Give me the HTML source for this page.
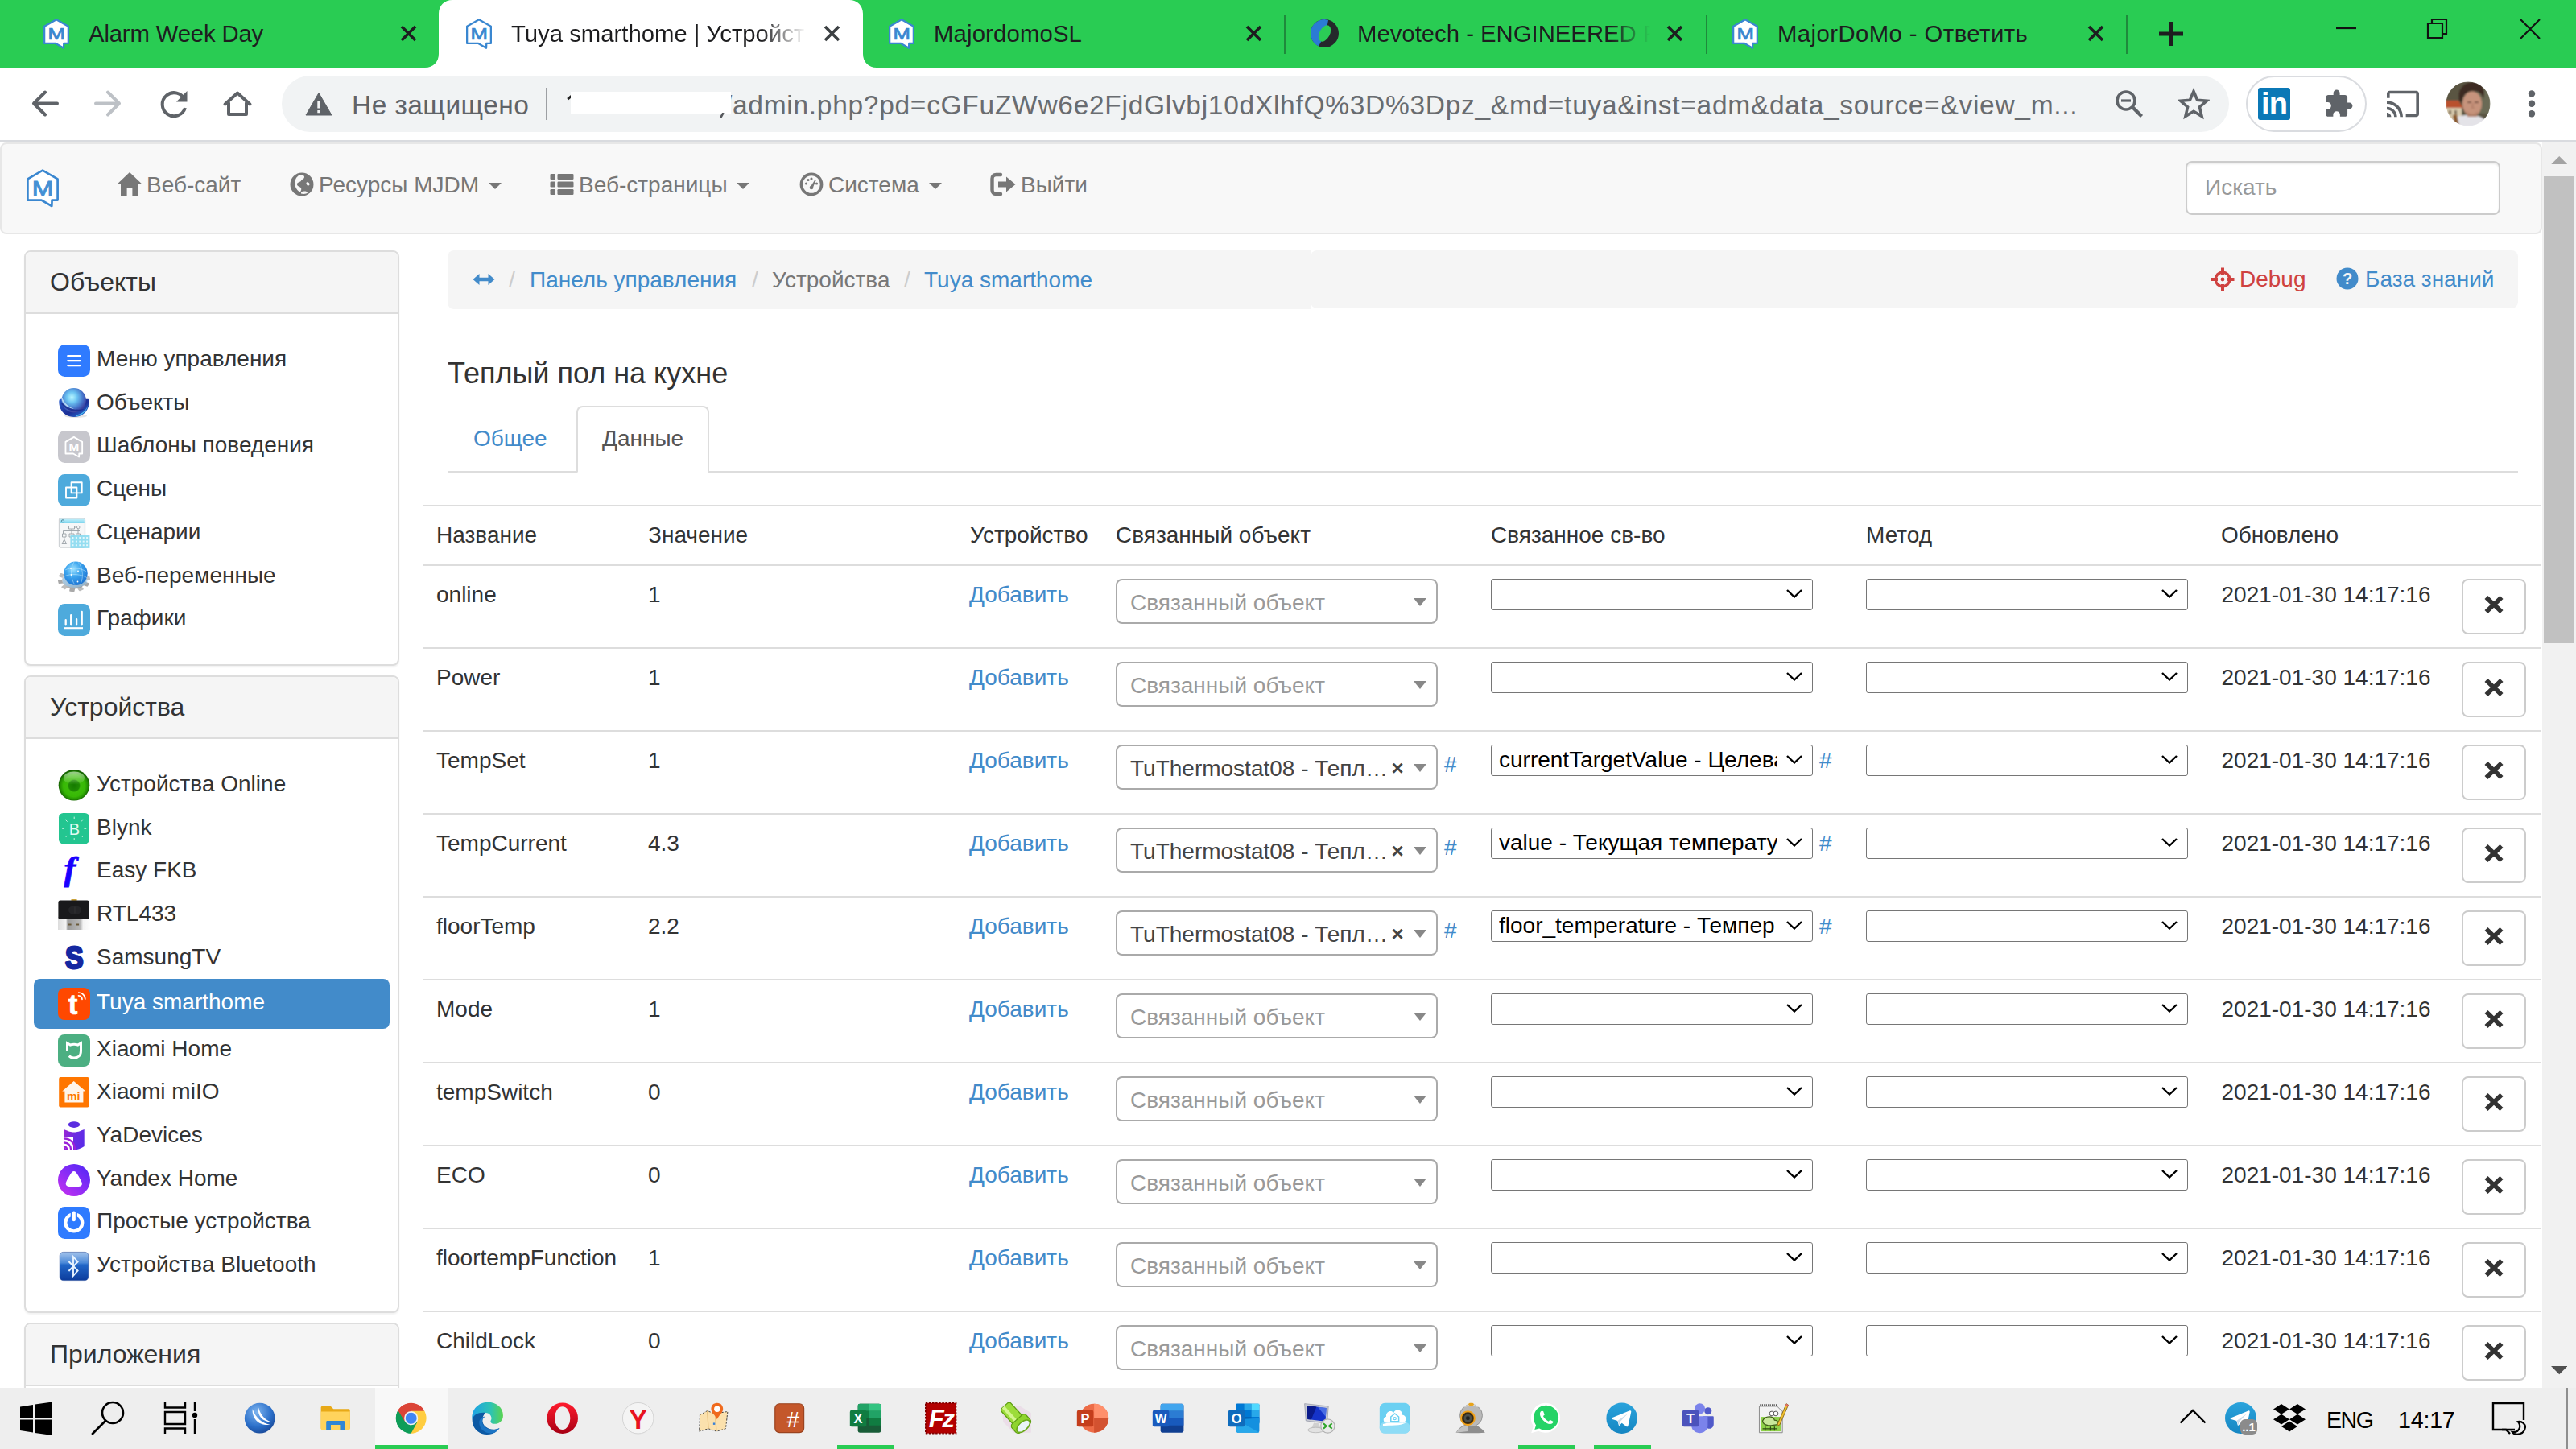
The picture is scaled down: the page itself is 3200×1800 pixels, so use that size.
<!DOCTYPE html><html lang="ru"><head><meta charset="utf-8"><title>Tuya smarthome | Устройства</title><style>
*{box-sizing:border-box}
html,body{margin:0;padding:0}
body{width:3200px;height:1800px;overflow:hidden;position:relative;background:#fff;font-family:"Liberation Sans",sans-serif;font-size:28px;line-height:40px;color:#333}
a{color:#428bca;text-decoration:none}
.abs{position:absolute}
svg{display:block}
/* chrome */
#tabstrip{position:absolute;left:0;top:0;width:3200px;height:84px;background:#29cc53}
.ttl{position:absolute;top:21.5px;height:40px;line-height:40px;font-size:29.3px;color:#1d1d1f;white-space:nowrap;overflow:hidden}
.tx{position:absolute;top:31px;width:21px;height:21px}
.tsep{position:absolute;top:19px;width:2px;height:48px;background:#1f8a3c}
#toolbar{position:absolute;left:0;top:84px;width:3200px;height:93px;background:#fff;border-bottom:3px solid #d9dbdf;z-index:5}
#omni{position:absolute;left:350px;top:10px;width:2419px;height:70px;border-radius:35px;background:#f1f3f4}
/* page */
#page{position:absolute;left:0;top:176px;width:3158px;height:1548px;overflow:hidden;background:#fff}
#navbar{position:absolute;left:0;top:1px;width:3158px;height:114px;background:#f8f8f8;border:2px solid #e7e7e7;border-radius:8px}
.nv{position:absolute;top:31px;height:40px;line-height:40px;color:#777;white-space:nowrap}
.nv svg{position:absolute;top:4px}
.caret{display:inline-block;width:0;height:0;margin-left:4px;vertical-align:middle;border-top:8px solid #777;border-left:8px solid transparent;border-right:8px solid transparent;position:relative;top:-1px}
#search{position:absolute;left:2713px;top:20.5px;width:391px;height:67px;border:2px solid #ccc;border-radius:8px;background:#fff;box-shadow:inset 0 2px 2px rgba(0,0,0,.075);color:#999;padding:11px 22px;line-height:40px}
.panel{position:absolute;left:30px;width:466px;background:#fff;border:2px solid #ddd;border-radius:8px;box-shadow:0 2px 2px rgba(0,0,0,.05)}
.phead{height:77px;background:#f5f5f5;border-bottom:2px solid #ddd;border-radius:6px 6px 0 0;padding:20px 30px;font-size:32px;line-height:35px;color:#333}
.it{position:absolute;left:10px;width:442px;height:54px;white-space:nowrap}
.it .ic{position:absolute;left:30px;top:7px;width:40px;height:40px}
.it .tx2{position:absolute;left:78px;top:5px;line-height:40px;color:#333}
.it.act{background:#428bca;border-radius:8px;height:62px}
.it.act .ic{top:11px}
.it.act .tx2{color:#fff;top:9px}
#bc{position:absolute;left:556px;top:135px;width:2572px;height:73px;line-height:40px;white-space:nowrap}
#bc .b1{position:absolute;left:0;top:0;width:1072px;height:73px;background:#f5f5f5;border-radius:8px 0 0 8px}
#bc .b2{position:absolute;left:1072px;top:0;width:1500px;height:72px;background:#f5f5f5;border-radius:8px}
#bc span,#bc a{position:absolute;top:17px}
.sl{color:#ccc}
#h4{position:absolute;left:556px;top:268px;font-size:36px;line-height:40px;color:#333;white-space:nowrap}
#tabs{position:absolute;left:556px;top:329px;width:2572px;height:82px;border-bottom:2px solid #ddd}
.row{position:absolute;left:526px;width:2631px;height:103px;border-top:2px solid #ddd}
.row>*{position:absolute;top:16px;white-space:nowrap}
.s2{left:860px;width:400px;height:56px;border:2px solid #aaa;border-radius:8px;background:#fff;line-height:56px;padding-left:16px;color:#999;top:16px}
.s2 .arr{position:absolute;left:368px;top:22px;width:0;height:0;border-top:10px solid #888;border-left:8px solid transparent;border-right:8px solid transparent}
.s2.v{color:#444}
.s2 .clr{position:absolute;left:340.5px;top:-1px;font-weight:bold;color:#444;font-size:26px}
.s2 .txt{display:block;width:324px;overflow:hidden;text-overflow:ellipsis;white-space:nowrap}
.ns{width:400px;height:38.5px;border:1.5px solid #767676;border-radius:3px;background:#fff;font-size:28px;line-height:36px;color:#000;padding-left:9px;overflow:hidden}
.ns .chev{position:absolute;right:12px;top:12px}
.ns .t{display:block;width:345px;overflow:hidden;white-space:nowrap}
.xb{left:2532px;width:80px;height:69px;border:2px solid #ccc;border-radius:8px;background:#fff}
/* taskbar */
#taskbar{position:absolute;left:0;top:1724px;width:3200px;height:76px;background:#eeeeee}
.tb{position:absolute;top:14px;width:48px;height:48px}
.ul{position:absolute;top:71px;height:5px;background:#29cc53}
</style></head><body>
<div id="tabstrip">
<svg class="abs" style="left:520px;top:0" width="580" height="84" viewBox="520 0 580 84"><path d="M528 84 C538 84 545 77 545 67 L545 17 C545 7 552 0 562 0 L1055 0 C1065 0 1072 7 1072 17 L1072 67 C1072 77 1079 84 1089 84 Z" fill="#fff"/></svg>
<div class="abs" style="left:54px;top:23px;width:32px;height:38px"><svg width="32" height="38.2" viewBox="0 0 40 47.75" style=""><path d="M20 1.6 L38.6 12.3 L38.6 38.6 L31.6 38.6 L31.3 46 L18.5 38.6 L1.4 38.6 L1.4 12.3 Z" fill="#fff" stroke="#3a87d0" stroke-width="2.9" stroke-linejoin="round"/><text x="0" y="0" text-anchor="middle" transform="translate(20.1 32.9) scale(1.27 1)" font-family="Liberation Sans,sans-serif" font-size="25.3" fill="#3a87d0" stroke="#3a87d0" stroke-width=".9">M</text></svg></div>
<div class="ttl" style="left:110px;width:240px;letter-spacing:-.16px">Alarm Week Day</div>
<svg class="tx" style="left:497px" viewBox="0 0 21 21"><path d="M2 2 L19 19 M19 2 L2 19" stroke="#1d1d1f" stroke-width="3.6" fill="none" stroke-linecap="butt"/></svg>
<div class="abs" style="left:579px;top:23px;width:32px;height:38px"><svg width="32" height="38.2" viewBox="0 0 40 47.75" style=""><path d="M20 1.6 L38.6 12.3 L38.6 38.6 L31.6 38.6 L31.3 46 L18.5 38.6 L1.4 38.6 L1.4 12.3 Z" fill="#fff" stroke="#3a87d0" stroke-width="2.9" stroke-linejoin="round"/><text x="0" y="0" text-anchor="middle" transform="translate(20.1 32.9) scale(1.27 1)" font-family="Liberation Sans,sans-serif" font-size="25.3" fill="#3a87d0" stroke="#3a87d0" stroke-width=".9">M</text></svg></div>
<div class="ttl" style="left:635px;width:366px;-webkit-mask-image:linear-gradient(90deg,#000 310px,transparent 366px)">Tuya smarthome | Устройства</div>
<svg class="tx" style="left:1023px" viewBox="0 0 21 21"><path d="M2 2 L19 19 M19 2 L2 19" stroke="#3c4043" stroke-width="3.6" fill="none" stroke-linecap="butt"/></svg>
<div class="abs" style="left:1104px;top:23px;width:32px;height:38px"><svg width="32" height="38.2" viewBox="0 0 40 47.75" style=""><path d="M20 1.6 L38.6 12.3 L38.6 38.6 L31.6 38.6 L31.3 46 L18.5 38.6 L1.4 38.6 L1.4 12.3 Z" fill="#fff" stroke="#3a87d0" stroke-width="2.9" stroke-linejoin="round"/><text x="0" y="0" text-anchor="middle" transform="translate(20.1 32.9) scale(1.27 1)" font-family="Liberation Sans,sans-serif" font-size="25.3" fill="#3a87d0" stroke="#3a87d0" stroke-width=".9">M</text></svg></div>
<div class="ttl" style="left:1160px;width:300px;letter-spacing:.15px">MajordomoSL</div>
<svg class="tx" style="left:1547px" viewBox="0 0 21 21"><path d="M2 2 L19 19 M19 2 L2 19" stroke="#1d1d1f" stroke-width="3.6" fill="none" stroke-linecap="butt"/></svg>
<div class="tsep" style="left:1595px"></div>
<div class="abs" style="left:1628px;top:24px;width:35px;height:35px"><svg width="35" height="35" viewBox="0 0 35 35" style=""><circle cx="17.5" cy="17.5" r="17.5" fill="#25282b"/><path d="M17.5 0 A17.5 17.5 0 0 0 10 33.3 L19 17.5 L22 1 Z" fill="#2b7bd4"/><path d="M22 6 C13 9 9 17 11 27 C16 29 24 24 25 14 C25 10 24 8 22 6 Z" fill="#fff" opacity=".0"/><ellipse cx="17.5" cy="17.5" rx="6.5" ry="11" transform="rotate(28 17.5 17.5)" fill="#2bcc56"/></svg></div>
<div class="ttl" style="left:1686px;width:364px;-webkit-mask-image:linear-gradient(90deg,#000 315px,transparent 364px)">Mevotech - ENGINEERED FOR</div>
<svg class="tx" style="left:2070px" viewBox="0 0 21 21"><path d="M2 2 L19 19 M19 2 L2 19" stroke="#1d1d1f" stroke-width="3.6" fill="none" stroke-linecap="butt"/></svg>
<div class="tsep" style="left:2119px"></div>
<div class="abs" style="left:2152px;top:23px;width:32px;height:38px"><svg width="32" height="38.2" viewBox="0 0 40 47.75" style=""><path d="M20 1.6 L38.6 12.3 L38.6 38.6 L31.6 38.6 L31.3 46 L18.5 38.6 L1.4 38.6 L1.4 12.3 Z" fill="#fff" stroke="#3a87d0" stroke-width="2.9" stroke-linejoin="round"/><text x="0" y="0" text-anchor="middle" transform="translate(20.1 32.9) scale(1.27 1)" font-family="Liberation Sans,sans-serif" font-size="25.3" fill="#3a87d0" stroke="#3a87d0" stroke-width=".9">M</text></svg></div>
<div class="ttl" style="left:2208px;width:340px;letter-spacing:.43px">MajorDoMo - Ответить</div>
<svg class="tx" style="left:2593px" viewBox="0 0 21 21"><path d="M2 2 L19 19 M19 2 L2 19" stroke="#1d1d1f" stroke-width="3.6" fill="none" stroke-linecap="butt"/></svg>
<div class="tsep" style="left:2641px"></div>
<svg class="abs" style="left:2682px;top:27px" width="30" height="30" viewBox="0 0 30 30"><path d="M15 0 V30 M0 15 H30" stroke="#1d1d1f" stroke-width="5" stroke-linecap="round"/></svg>
<svg class="abs" style="left:2902px;top:20px" width="260" height="32" viewBox="0 0 260 32"><path d="M0 15 H25" stroke="#111" stroke-width="2.2"/><path d="M114 9 H132 V27 H114 Z M119 9 V4 H137 V22 H132" stroke="#111" stroke-width="2.2" fill="none"/><path d="M229 4 L253 28 M253 4 L229 28" stroke="#111" stroke-width="2.2"/></svg>
</div>
<div id="toolbar">
<svg class="abs" style="left:0;top:0" width="340" height="92" viewBox="0 0 340 92"><path d="M71 44.5 H43 M56 30.5 L42 44.5 L56 58.5" stroke="#5f6368" stroke-width="4" fill="none" stroke-linecap="round" stroke-linejoin="round"/><path d="M119 44.5 H147 M134 30.5 L148 44.5 L134 58.5" stroke="#bdc1c6" stroke-width="4" fill="none" stroke-linecap="round" stroke-linejoin="round"/><path d="M229.5 40 A14.5 14.5 0 1 0 230 50" stroke="#5f6368" stroke-width="4" fill="none"/><path d="M232.5 29 V42.5 H219 Z" fill="#5f6368"/><path d="M284 44 V58 H306 V44 M279.5 45.5 L295 31.5 L310.5 45.5" stroke="#5f6368" stroke-width="4" fill="none" stroke-linejoin="round" stroke-linecap="round"/></svg>
<div id="omni">
<svg class="abs" style="left:29px;top:21px" width="34" height="29" viewBox="0 0 34 29"><path d="M17 0.5 L33 28 H1 Z" fill="#5f6368" stroke="#5f6368" stroke-width="1" stroke-linejoin="round"/><path d="M15.3 10 H18.7 V19.5 H15.3 Z M15.3 22 H18.7 V25.3 H15.3 Z" fill="#f1f3f4"/></svg>
<div class="abs" style="left:87px;top:13.5px;font-size:33.5px;line-height:46px;color:#5f6368;letter-spacing:.45px;white-space:nowrap">Не защищено</div>
<div class="abs" style="left:328px;top:15px;width:2px;height:40px;background:#9d9fa3"></div>
<svg class="abs" style="left:352px;top:22px" width="12" height="12" viewBox="0 0 12 12"><path d="M3.2 7.2 L8 3.2" stroke="#222" stroke-width="3"/></svg>
<div class="abs" style="left:359px;top:20px;width:199px;height:28px;background:#fff"></div>
<div class="abs" style="left:550px;top:13.5px;font-size:33.5px;line-height:46px;color:#696c70;letter-spacing:.71px;white-space:nowrap">/admin.php?pd=cGFuZWw6e2FjdGlvbj10dXlhfQ%3D%3Dpz_&amp;md=tuya&amp;inst=adm&amp;data_source=&amp;view_m...</div>
<div class="abs" style="left:359px;top:20px;width:199px;height:28px;background:#fff"></div>
<svg class="abs" style="left:542px;top:46px" width="12" height="8" viewBox="0 0 12 8"><path d="M3.2 6.2 L6.6 0" stroke="#55585c" stroke-width="2.6"/></svg>
<svg class="abs" style="left:2277px;top:17px" width="36" height="36" viewBox="0 0 36 36"><circle cx="14" cy="14" r="11" stroke="#5f6368" stroke-width="3.6" fill="none"/><path d="M8 14 H20" stroke="#5f6368" stroke-width="3.2"/><path d="M22 22 L33.5 33.5" stroke="#5f6368" stroke-width="4.4"/></svg>
<svg class="abs" style="left:2355px;top:15px" width="40" height="40" viewBox="0 0 40 40"><path d="M20 4.5 L24.6 15.3 L36.3 16.3 L27.4 24 L30.1 35.4 L20 29.3 L9.9 35.4 L12.6 24 L3.7 16.3 L15.4 15.3 Z" stroke="#5f6368" stroke-width="3.6" fill="none" stroke-linejoin="miter"/></svg>
</div>
<div class="abs" style="left:2790px;top:10px;width:150px;height:70px;border:2px solid #dadce0;border-radius:35px"></div><div class="abs" style="left:2805px;top:25px;width:40px;height:40px;background:#0b78b6;border-radius:3px;color:#fff;font-weight:bold;font-size:38px;line-height:41px;text-align:center;letter-spacing:-1px;overflow:hidden">in</div><svg class="abs" style="left:2886px;top:26px" width="38" height="38" viewBox="0 0 24 24"><path d="M20.5 11H19V7c0-1.1-.9-2-2-2h-4V3.5C13 2.12 11.88 1 10.5 1S8 2.12 8 3.5V5H4c-1.1 0-1.99.9-1.99 2v3.8H3.5c1.49 0 2.7 1.21 2.7 2.7s-1.21 2.7-2.7 2.7H2V20c0 1.1.9 2 2 2h3.8v-1.5c0-1.49 1.21-2.7 2.7-2.7 1.49 0 2.7 1.21 2.7 2.7V22H17c1.1 0 2-.9 2-2v-4h1.5c1.38 0 2.5-1.12 2.5-2.5S21.880 11 20.500 11z" fill="#5f6368"/></svg><svg class="abs" style="left:2963px;top:25px" width="44" height="40" viewBox="0 0 24 22"><path d="M1 17v3h3c0-1.66-1.34-3-3-3zm0-4v2c2.760 0 5 2.240 5 5h2c0-3.870-3.130-7-7-7zm0-4v2c4.970 0 9 4.030 9 9h2c0-6.080-4.930-11-11-11zm20-7H3c-1.100 0-2 .9-2 2v3h2V4h18v14h-7v2h7c1.100 0 2-.9 2-2V4c0-1.100-.9-2-2-2z" fill="#5f6368"/></svg><svg class="abs" style="left:3038px;top:17px" width="56" height="56" viewBox="0 0 56 56"><defs><clipPath id="avc"><circle cx="28" cy="28" r="27.5"/></clipPath><filter id="avb" x="-10%" y="-10%" width="120%" height="120%"><feGaussianBlur stdDeviation="0.9"/></filter></defs><g clip-path="url(#avc)"><g filter="url(#avb)"><rect width="56" height="56" fill="#5a5443"/><rect x="38" y="0" width="18" height="40" fill="#6b6a55"/><rect x="0" y="30" width="20" height="22" fill="#d6c8ab"/><path d="M0 24 L16 24 L22 33 L0 33 Z" fill="#b9512f"/><rect x="4" y="36" width="3" height="5" fill="#7a6a55"/><rect x="11" y="36" width="3" height="5" fill="#7a6a55"/><path d="M4 56 C7 45 15 42 30 42 C42 42 50 45 53 56 Z" fill="#e4e3e8"/><path d="M9 42 L14 41 L17 56 L11 56 Z" fill="#8a5a2b"/><ellipse cx="33" cy="28" rx="12" ry="15.500" fill="#c6937b"/><path d="M17 24 C14 8 24 1 34 1 C45 1 50 8 47 22 C45 15 41 12 34 12 C27 12 21 16 20 27 Z" fill="#3e2b20"/><path d="M26 37 C29 42 37 42 40 37 L39 44 L27 44Z" fill="#b07f68"/><path d="M27 26 H32 M36 26 H41" stroke="#5b3d30" stroke-width="1.500"/><path d="M34 27 L33 33 H36" stroke="#a87660" stroke-width="1.200" fill="none"/></g></g></svg><svg class="abs" style="left:3139px;top:26px" width="12" height="38" viewBox="0 0 12 38"><circle cx="6" cy="6.4" r="4.2" fill="#5f6368"/><circle cx="6" cy="18.8" r="4.2" fill="#5f6368"/><circle cx="6" cy="31.2" r="4.2" fill="#5f6368"/></svg>
</div>
<div id="page">
<div id="navbar">
<div class="abs" style="left:31px;top:31px;width:40px;height:48px"><svg width="40" height="48" viewBox="0 0 40 48" style=""><path d="M20 1.6 L38.6 12.3 L38.6 38.6 L31.6 38.6 L31.3 46 L18.5 38.6 L1.4 38.6 L1.4 12.3 Z" fill="#fff" stroke="#3a87d0" stroke-width="2.7" stroke-linejoin="round"/><text x="0" y="0" text-anchor="middle" transform="translate(20.1 32.9) scale(1.27 1)" font-family="Liberation Sans,sans-serif" font-size="25.3" fill="#4590d4" stroke="#4590d4" stroke-width=".9">M</text></svg></div>
<div class="nv" style="left:144px"><svg width="30" height="30" viewBox="0 0 30 30" style=""><path d="M15 0 L30 14.300 H26 V29.700 H18.400 V19.500 H11.600 V29.700 H4 V14.300 H0 Z" fill="#777"/></svg><span style="margin-left:36px">Веб-сайт</span></div>
<div class="nv" style="left:358px"><svg width="30" height="30" viewBox="0 0 30 30" style=""><circle cx="15" cy="15" r="14.500" fill="#777"/><path d="M12 3.500 C15 4 17.500 3 18 5.500 C18.500 8 15 8.500 14 10.500 C13 12.500 9.500 12 9 14.500 C8.500 17 12 17.500 13.500 19 C15 20.500 14 23.500 12.500 25 C10.500 23 8 21 7 18 C6 15 5.500 11 7.500 8 C8.500 6 10 4.500 12 3.500 Z M21 12.500 C22.500 12 24.500 13 24.500 15 C24.500 16.500 22.500 17 21.500 16 C20.500 15 20 13 21 12.500 Z M14 24.500 C17 23 21 23.500 23 25 C20.500 27 17 27.500 14 26.500 Z" fill="#f8f8f8"/></svg><span style="margin-left:36px">Ресурсы MJDM</span> <span class="caret"></span></div>
<div class="nv" style="left:681px"><svg width="30" height="30" viewBox="0 0 30 30" style=""><rect x="0.5" y="2" width="6.500" height="7" rx="1.2" fill="#777"/><rect x="9.500" y="2" width="20" height="7" rx="1.2" fill="#777"/><rect x="0.5" y="11.5" width="6.500" height="7" rx="1.2" fill="#777"/><rect x="9.500" y="11.5" width="20" height="7" rx="1.2" fill="#777"/><rect x="0.5" y="21" width="6.500" height="7" rx="1.2" fill="#777"/><rect x="9.500" y="21" width="20" height="7" rx="1.2" fill="#777"/></svg><span style="margin-left:36px">Веб-страницы</span> <span class="caret"></span></div>
<div class="nv" style="left:991px"><svg width="30" height="30" viewBox="0 0 30 30" style=""><circle cx="15" cy="15" r="12.6" fill="none" stroke="#777" stroke-width="3.600"/><circle cx="8.500" cy="14" r="1.600" fill="#777"/><circle cx="11" cy="9.500" r="1.600" fill="#777"/><circle cx="15" cy="8" r="1.600" fill="#777"/><circle cx="21.500" cy="14" r="1.600" fill="#777"/><path d="M13.500 18.500 L19.500 9 L20.700 9.800 L16.500 20 Z" fill="#777"/><circle cx="15" cy="19" r="2.300" fill="#777"/></svg><span style="margin-left:36px">Система</span> <span class="caret"></span></div>
<div class="nv" style="left:1228px"><svg width="32" height="30" viewBox="0 0 32 30" style=""><path d="M13 3 H7.500 C4.500 3 2.500 5 2.500 8 V22 C2.500 25 4.500 27 7.500 27 H13" fill="none" stroke="#777" stroke-width="4.400" stroke-linecap="round"/><path d="M10 11.500 H20 V5.500 L31.500 15 L20 24.500 V18.500 H10 Z" fill="#777"/></svg><span style="margin-left:38px">Выйти</span></div>
<div id="search">Искать</div>
</div>
<div class="panel" style="top:135px;height:516px"><div class="phead">Объекты</div><div class="it" style="top:108.0px"><div class="ic"><svg width="40" height="40" viewBox="0 0 40 40" style=""><rect width="40" height="40" rx="8.5" fill="#2f7bff"/><path d="M12.3 14.2 H27.5 M12.3 20.1 H27.5 M12.3 26.1 H27.5" stroke="#fff" stroke-width="2.3" stroke-linecap="round"/></svg></div><div class="tx2">Меню управления</div></div><div class="it" style="top:161.7px"><div class="ic"><svg width="40" height="40" viewBox="0 0 40 40" style=""><defs><radialGradient id="sob" cx=".42" cy=".38" r=".62"><stop offset="0" stop-color="#b8f6ff"/><stop offset=".35" stop-color="#6cc4f2"/><stop offset=".75" stop-color="#4470c8"/><stop offset="1" stop-color="#3a3f9c"/></radialGradient><linearGradient id="sob2" x1="0" y1="0" x2="1" y2="1"><stop offset="0" stop-color="#2a5fd0"/><stop offset=".55" stop-color="#1c2f96"/><stop offset="1" stop-color="#2c7be0"/></linearGradient></defs><ellipse cx="22" cy="34.5" rx="14" ry="2.6" fill="#000" opacity=".10"/><path d="M1.3 17 C1.3 28 9 36 20 36 C31 36 38.700 28 38.700 17 C38.700 15.500 38.300 14.500 37.500 13.800 L2.500 13.800 C1.700 14.500 1.300 15.500 1.300 17 Z" fill="url(#sob2)"/><path d="M22 33.500 C29 33 35.500 28 37.600 20 C36 28.500 30 34.500 22 35.200 Z" fill="#4fc4f6"/><circle cx="19.7" cy="15.3" r="15.2" fill="url(#sob)"/><path d="M5.200 12 C8 19 14 24.500 23 27 C14 26 7 21 4.600 15 Z" fill="#dff8ff" opacity=".7"/><path d="M4.500 17.500 C10 24.500 20 28.500 33 26 C25 31 11 29.500 4.500 20 Z" fill="#1b2c8e" opacity=".85"/></svg></div><div class="tx2">Объекты</div></div><div class="it" style="top:215.4px"><div class="ic"><svg width="40" height="40" viewBox="0 0 40 40" style=""><rect width="40" height="40" rx="8.5" fill="#c7c7cd"/><g transform="translate(8.7 7) scale(.556)"><path d="M20 1.6 L38.6 12.3 L38.6 38.6 L31.6 38.6 L31.3 46 L18.5 38.6 L1.4 38.6 L1.4 12.3 Z" fill="none" stroke="#fff" stroke-width="3.300" stroke-linejoin="round"/><text x="0" y="0" text-anchor="middle" transform="translate(20.1 32.5) scale(1.2 1)" font-family="Liberation Sans,sans-serif" font-weight="bold" font-size="23" fill="#fff">M</text></g></svg></div><div class="tx2">Шаблоны поведения</div></div><div class="it" style="top:269.1px"><div class="ic"><svg width="40" height="40" viewBox="0 0 40 40" style=""><rect width="40" height="40" rx="8.5" fill="#4eaadc"/><path d="M16.600 10.300 H29.700 V23.400 H16.600 Z M10 16.500 H23.400 V29.600 H10 Z" fill="none" stroke="#fff" stroke-width="1.900" stroke-linejoin="round"/></svg></div><div class="tx2">Сцены</div></div><div class="it" style="top:322.8px"><div class="ic"><svg width="40" height="40" viewBox="0 0 40 40" style=""><defs><linearGradient id="ssc" x1="0" y1="0" x2="0" y2="1"><stop offset="0" stop-color="#bfeefa"/><stop offset="1" stop-color="#7fd6ee"/></linearGradient></defs><rect x="1.5" y="1" width="32" height="36" rx="1.800" fill="#f6f7f8" stroke="#cfd3d6" stroke-width="1.300"/><rect x="2.200" y="1.700" width="30.600" height="5.300" fill="url(#ssc)"/><circle cx="6" cy="4.300" r="1.600" fill="none" stroke="#477f93" stroke-width=".9"/><path d="M13.500 10.500 H20.500 V14 H13.500 Z M23.500 12 A1.700 1.700 0 1 0 27 12 A1.700 1.700 0 1 0 23.500 12 M20.500 12 H23.500 M17 14 V20 M6.500 16.500 H27 M6.500 16.500 V20 M25 14 V20 M5.500 20 H10 V24 H5.500 Z M14 20 H20 V24 H14 Z M23 20 H27.500 V22.500 M7.800 24 V27 M5 32.500 L7.800 27 L10.600 32.500 Z" fill="none" stroke="#9aa0a6" stroke-width=".9"/><rect x="15.400" y="21.900" width="24" height="16" fill="#86d9ef" opacity=".88"/><rect x="17.5" y="24.0" width="2" height="2" fill="#f2fbfd" opacity=".85"/><rect x="21.9" y="24.0" width="2" height="2" fill="#f2fbfd" opacity=".85"/><rect x="26.3" y="24.0" width="2" height="2" fill="#f2fbfd" opacity=".85"/><rect x="30.7" y="24.0" width="2" height="2" fill="#f2fbfd" opacity=".85"/><rect x="35.1" y="24.0" width="2" height="2" fill="#f2fbfd" opacity=".85"/><rect x="17.5" y="28.6" width="2" height="2" fill="#f2fbfd" opacity=".85"/><rect x="21.9" y="28.6" width="2" height="2" fill="#f2fbfd" opacity=".85"/><rect x="26.3" y="28.6" width="2" height="2" fill="#f2fbfd" opacity=".85"/><rect x="30.7" y="28.6" width="2" height="2" fill="#f2fbfd" opacity=".85"/><rect x="35.1" y="28.6" width="2" height="2" fill="#f2fbfd" opacity=".85"/><rect x="17.5" y="33.2" width="2" height="2" fill="#f2fbfd" opacity=".85"/><rect x="21.9" y="33.2" width="2" height="2" fill="#f2fbfd" opacity=".85"/><rect x="26.3" y="33.2" width="2" height="2" fill="#f2fbfd" opacity=".85"/><rect x="30.7" y="33.2" width="2" height="2" fill="#f2fbfd" opacity=".85"/><rect x="35.1" y="33.2" width="2" height="2" fill="#f2fbfd" opacity=".85"/></svg></div><div class="tx2">Сценарии</div></div><div class="it" style="top:376.5px"><div class="ic"><svg width="40" height="40" viewBox="0 0 40 40" style=""><defs><radialGradient id="swv" cx=".4" cy=".32" r=".7"><stop offset="0" stop-color="#9fe2ff"/><stop offset=".45" stop-color="#3ea6ee"/><stop offset="1" stop-color="#1b73d3"/></radialGradient><linearGradient id="swg" x1="0" y1="0" x2="1" y2="1"><stop offset="0" stop-color="#e6e6e6"/><stop offset=".5" stop-color="#bcbcbc"/><stop offset="1" stop-color="#8f8f8f"/></linearGradient></defs><g transform="translate(20 23.300) scale(1 .74)"><rect x="-3.2" y="-20" width="6.4" height="7" rx="1" transform="rotate(-100)" fill="#a9a9a9"/><rect x="-3.2" y="-20" width="6.4" height="7" rx="1" transform="rotate(-64)" fill="#bdbdbd"/><rect x="-3.2" y="-20" width="6.4" height="7" rx="1" transform="rotate(-28)" fill="#a9a9a9"/><rect x="-3.2" y="-20" width="6.4" height="7" rx="1" transform="rotate(8)" fill="#bdbdbd"/><rect x="-3.2" y="-20" width="6.4" height="7" rx="1" transform="rotate(44)" fill="#a9a9a9"/><rect x="-3.2" y="-20" width="6.4" height="7" rx="1" transform="rotate(80)" fill="#bdbdbd"/><rect x="-3.2" y="-20" width="6.4" height="7" rx="1" transform="rotate(116)" fill="#a9a9a9"/><rect x="-3.2" y="-20" width="6.4" height="7" rx="1" transform="rotate(152)" fill="#bdbdbd"/><rect x="-3.2" y="-20" width="6.4" height="7" rx="1" transform="rotate(188)" fill="#a9a9a9"/><rect x="-3.2" y="-20" width="6.4" height="7" rx="1" transform="rotate(224)" fill="#bdbdbd"/><circle r="15" fill="url(#swg)"/></g><ellipse cx="21" cy="24" rx="15.500" ry="9" fill="#8cc7f2" opacity=".55"/><circle cx="22" cy="15.300" r="14.700" fill="url(#swv)"/><path d="M9 11 C15 7.500 28 8 35 13 M8 19 C15 15 30 16 36.500 21 M20 1 C15 8 15.500 22 21 29.500 M25 1.200 C31 8 32 20 28 28.500" stroke="#cdeeff" stroke-width=".7" fill="none" opacity=".7"/><circle cx="16" cy="9" r=".9" fill="#fff"/><circle cx="25" cy="12.500" r=".9" fill="#fff"/><circle cx="16.500" cy="17" r=".9" fill="#fff"/><circle cx="24.500" cy="25.500" r=".9" fill="#fff"/></svg></div><div class="tx2">Веб-переменные</div></div><div class="it" style="top:430.2px"><div class="ic"><svg width="40" height="40" viewBox="0 0 40 40" style=""><rect width="40" height="40" rx="8.5" fill="#4eaadc"/><path d="M7.900 30.200 H31" stroke="#fff" stroke-width="2.100"/><path d="M9.700 26.300 V20.200 M16.200 26.300 V14.200 M23.100 26.300 V19.100 M29.700 26.300 V9.800" stroke="#fff" stroke-width="2.300" stroke-linecap="round"/></svg></div><div class="tx2">Графики</div></div></div>
<div class="panel" style="top:663px;height:792px"><div class="phead">Устройства</div><div class="it" style="top:108.0px"><div class="ic"><svg width="40" height="40" viewBox="0 0 40 40" style=""><defs><radialGradient id="don" cx=".5" cy=".52" r=".5"><stop offset="0" stop-color="#157a00"/><stop offset=".34" stop-color="#1f8a04"/><stop offset=".42" stop-color="#3cbc0a"/><stop offset=".7" stop-color="#37b805"/><stop offset=".88" stop-color="#238f02"/><stop offset="1" stop-color="#135e00"/></radialGradient><linearGradient id="don2" x1="0" y1="0" x2="0" y2="1"><stop offset="0" stop-color="#fff" stop-opacity=".55"/><stop offset="1" stop-color="#fff" stop-opacity="0"/></linearGradient></defs><circle cx="20" cy="19.300" r="19.300" fill="url(#don)"/><ellipse cx="20" cy="10.500" rx="13" ry="8" fill="url(#don2)"/></svg></div><div class="tx2">Устройства Online</div></div><div class="it" style="top:161.7px"><div class="ic"><svg width="40" height="40" viewBox="0 0 40 40" style=""><rect x="1" y="0" width="38" height="38.300" rx="5.500" fill="#23c590"/><text x="20.300" y="26.500" text-anchor="middle" font-family="Liberation Sans,sans-serif" font-size="20" fill="#e4faf1">B</text><g stroke="#c9f3e3" stroke-width="1" stroke-linecap="round"><path d="M20.200 5 V7 M20.200 31.500 V33.500 M5.600 19.300 H7.600 M32.800 19.300 H34.800 M10 9 L11.400 10.400 M29 28.200 L30.400 29.600 M10 29.600 L11.400 28.200 M29 10.400 L30.400 9"/></g></svg></div><div class="tx2">Blynk</div></div><div class="it" style="top:215.4px"><div class="ic"><svg width="40" height="40" viewBox="0 0 40 40" style=""><text x="0" y="0" transform="translate(7.5 29.5) scale(1.05 1)" font-family="Liberation Serif,serif" font-style="italic" font-weight="bold" font-size="42" fill="#1a00ff" stroke="#1a00ff" stroke-width=".8">f</text></svg></div><div class="tx2">Easy FKB</div></div><div class="it" style="top:269.1px"><div class="ic"><svg width="40" height="40" viewBox="0 0 40 40" style=""><defs><linearGradient id="drt" x1="0" y1="0" x2="1" y2="0"><stop offset="0" stop-color="#dcdcdc"/><stop offset=".25" stop-color="#f4f4f4"/><stop offset=".3" stop-color="#9b9b9b"/><stop offset=".7" stop-color="#b9b9b9"/><stop offset=".78" stop-color="#f4f4f4"/><stop offset="1" stop-color="#fdfdfd"/></linearGradient></defs><rect x="0" y="22" width="40" height="16" fill="url(#drt)"/><rect x="16.500" y="-1" width="7" height="3" fill="#c9a23a"/><rect x="0.400" y="1.500" width="38.400" height="23.500" rx="2.500" fill="#19191b"/><ellipse cx="21" cy="13.500" rx="8" ry="5.500" fill="#242427"/><path d="M14 13.500 H28 M21 9.500 V17.500" stroke="#303033" stroke-width="1.200"/><rect x="13" y="30.500" width="3.600" height="2" fill="#6b5a3a"/><rect x="22.500" y="30.500" width="3.600" height="2" fill="#6b5a3a"/></svg></div><div class="tx2">RTL433</div></div><div class="it" style="top:322.8px"><div class="ic"><svg width="40" height="40" viewBox="0 0 40 40" style=""><text x="0" y="0" text-anchor="middle" transform="translate(20.300 32.400) scale(.86 1)" font-family="Liberation Sans,sans-serif" font-weight="bold" font-size="39.500" fill="#1528a1" stroke="#1528a1" stroke-width="2.800" stroke-linejoin="round">S</text></svg></div><div class="tx2">SamsungTV</div></div><div class="it act" style="top:374.5px"><div class="ic"><svg width="40" height="40" viewBox="0 0 40 40" style=""><rect width="40" height="40" rx="8" fill="#ff4800"/><text x="18.500" y="32.600" text-anchor="middle" font-family="Liberation Sans,sans-serif" font-weight="bold" font-size="35" fill="#fff" stroke="#fff" stroke-width=".7" stroke-linejoin="round">t</text><path d="M25.500 9.800 A4.500 4.500 0 0 1 30 14.300 M25.800 6 A8.300 8.300 0 0 1 33.800 14" stroke="#fff" stroke-width="1.700" fill="none" stroke-linecap="round"/></svg></div><div class="tx2">Tuya smarthome</div></div><div class="it" style="top:436.5px"><div class="ic"><svg width="40" height="40" viewBox="0 0 40 40" style=""><rect width="40" height="40" rx="8" fill="#4caf82"/><path d="M11.500 21 V10.800 L15.300 13 C18.500 12 21.500 12 24.700 13 L28.500 10.800 V20.500 C28.500 26 24.800 29 20 29 C17.500 29 15.300 28.200 13.800 26.600" stroke="#fff" stroke-width="3" fill="none" stroke-linejoin="miter" stroke-linecap="butt"/></svg></div><div class="tx2">Xiaomi Home</div></div><div class="it" style="top:490.2px"><div class="ic"><svg width="40" height="40" viewBox="0 0 40 40" style=""><rect x="1.200" y="0" width="37.400" height="37.600" rx="2" fill="#ff7600"/><path d="M19.700 5 L34.300 17.600 H31.400 V31.500 H8.400 V17.600 H5.300 Z" fill="#fff5ea"/><text x="19.300" y="27.600" text-anchor="middle" font-family="Liberation Sans,sans-serif" font-weight="bold" font-size="13.500" fill="#ff7600" textLength="16.500" lengthAdjust="spacingAndGlyphs">mi</text></svg></div><div class="tx2">Xiaomi miIO</div></div><div class="it" style="top:543.9px"><div class="ic"><svg width="40" height="40" viewBox="0 0 40 40" style=""><defs><linearGradient id="dyd" x1="0" y1=".3" x2="1" y2=".7"><stop offset="0" stop-color="#9426d6"/><stop offset=".5" stop-color="#6a2be2"/><stop offset="1" stop-color="#5a2be8"/></linearGradient></defs><path d="M7.200 11 C11 12 14 14.500 20 14.500 C26 14.500 29 12 32.700 11 V32 C29 34.500 24 36.500 19 37 L19 20 L7.200 21 Z" fill="url(#dyd)"/><path d="M7.200 20 H20 V37 L19 37 Z" fill="#fff" opacity="0"/><ellipse cx="20" cy="5.100" rx="7.200" ry="3.900" fill="#5b2de0"/><g stroke="#9b22d8" stroke-width="2.300" fill="none" stroke-linecap="round"><path d="M8 32.500 A3 3 0 0 1 11 35.500"/><path d="M8 27.500 A8 8 0 0 1 16 35.500"/><path d="M8 22.500 A13 13 0 0 1 21 35.500" /></g><circle cx="8.500" cy="35.300" r="1.500" fill="#9b22d8"/></svg></div><div class="tx2">YaDevices</div></div><div class="it" style="top:597.6px"><div class="ic"><svg width="40" height="40" viewBox="0 0 40 40" style=""><defs><linearGradient id="dyh" x1=".15" y1=".9" x2=".85" y2=".1"><stop offset="0" stop-color="#bb30f0"/><stop offset=".5" stop-color="#8a2cf6"/><stop offset="1" stop-color="#5a28f5"/></linearGradient></defs><circle cx="20" cy="20" r="20" fill="url(#dyh)"/><path d="M19.800 9 C21.800 9 23 10.800 24.600 13.600 C27 17.800 30.600 23 29.800 25.600 C28.800 28.400 23.500 28.500 19.800 28.500 C16.100 28.500 10.800 28.400 9.900 25.600 C9 23 12.600 17.800 15 13.600 C16.600 10.800 17.800 9 19.800 9 Z" fill="#fff"/></svg></div><div class="tx2">Yandex Home</div></div><div class="it" style="top:651.3px"><div class="ic"><svg width="40" height="40" viewBox="0 0 40 40" style=""><rect width="40" height="40" rx="8.5" fill="#2f7bff"/><circle cx="19.800" cy="19.800" r="10.500" stroke="#fff" stroke-width="4.200" fill="none"/><path d="M19.800 5 V18" stroke="#2f7bff" stroke-width="8.200"/><path d="M19.800 7.500 V16.200" stroke="#fff" stroke-width="4.100" stroke-linecap="round"/></svg></div><div class="tx2">Простые устройства</div></div><div class="it" style="top:705.0px"><div class="ic"><svg width="40" height="40" viewBox="0 0 40 40" style=""><defs><linearGradient id="dbt" x1="0" y1="0" x2="0" y2="1"><stop offset="0" stop-color="#a3c4ec"/><stop offset=".38" stop-color="#4d8ad8"/><stop offset=".45" stop-color="#2267c8"/><stop offset="1" stop-color="#0c3c9c"/></linearGradient></defs><rect x="2.200" y="2.400" width="35.600" height="35.200" rx="4.500" fill="url(#dbt)" stroke="#2a4f9a" stroke-width=".6"/><path d="M13.400 14 L24.600 25.600 L19 31.800 V8.200 L24.600 14.400 L13.400 26" stroke="#e8f4ff" stroke-width="1.900" fill="none" stroke-linejoin="miter"/></svg></div><div class="tx2">Устройства Bluetooth</div></div></div>
<div class="panel" style="top:1467px;height:200px"><div class="phead">Приложения</div></div>
<div id="bc"><div class="b1"></div><div class="b2"></div>
<span style="left:31px;top:22px"><svg width="28" height="28" viewBox="0 0 28 28" style=""><path d="M0.500 14 L8.500 7 V11.800 H19.500 V7 L27.500 14 L19.500 21 V16.200 H8.500 V21 Z" fill="#428bca"/></svg></span>
<span class="sl" style="left:76px">/</span><a style="left:102px">Панель управления</a><span class="sl" style="left:378px">/</span><span style="left:403px;color:#777">Устройства</span><span class="sl" style="left:567px">/</span><a style="left:592px">Tuya smarthome</a>
<span style="left:2190px;top:21px"><svg width="30" height="30" viewBox="0 0 30 30" style=""><circle cx="15" cy="15" r="8.800" fill="none" stroke="#cf4240" stroke-width="3.400"/><path d="M13 0.500 H17 V9 H13 Z M13 21 H17 V29.500 H13 Z M0.500 13 H9 V17 H0.500 Z M21 13 H29.500 V17 H21 Z" fill="#cf4240"/><circle cx="15" cy="15" r="2.400" fill="#cf4240"/></svg></span><span style="left:2226px;top:16px;color:#cf4240">Debug</span>
<span style="left:2346px;top:21px"><svg width="28" height="28" viewBox="0 0 28 28" style=""><circle cx="14" cy="14" r="13.500" fill="#428bca"/><text x="14" y="21" text-anchor="middle" font-family="Liberation Sans,sans-serif" font-weight="bold" font-size="20" fill="#f5f5f5">?</text></svg></span><a style="left:2382px;top:16px">База знаний</a>
</div>
<div id="h4">Теплый пол на кухне</div>
<div id="tabs"><a class="abs" style="left:32px;top:20px">Общее</a><div class="abs" style="left:160px;top:-1px;width:165px;height:84px;border:2px solid #ddd;border-bottom:2px solid #fff;border-radius:8px 8px 0 0;background:#fff;color:#555;padding:19px 30px">Данные</div></div>
<div class="row" style="top:451px;height:74px"><span style="left:16px">Название</span><span style="left:279px">Значение</span><span style="left:679px">Устройство</span><span style="left:860px">Связанный объект</span><span style="left:1326px">Связанное св-во</span><span style="left:1792px">Метод</span><span style="left:2233px">Обновлено</span></div>
<div class="row" style="top:525px"><span style="left:16px">online</span><span style="left:279px">1</span><a style="left:678px">Добавить</a><div class="s2">Связанный объект<span class="arr"></span></div><div class="ns" style="left:1326px"><svg class="chev" width="20" height="11" viewBox="0 0 20 11"><path d="M1 1 L10 9.5 L19 1" stroke="#000" stroke-width="2.4" fill="none"/></svg></div><div class="ns" style="left:1792px"><svg class="chev" width="20" height="11" viewBox="0 0 20 11"><path d="M1 1 L10 9.5 L19 1" stroke="#000" stroke-width="2.4" fill="none"/></svg></div><span style="left:2233.5px">2021-01-30 14:17:16</span><div class="xb"><svg style="position:absolute;left:25px;top:18px" width="26" height="24" viewBox="0 0 26 24"><path d="M1.500 5 L5.500 1 L13 8.200 L20.500 1 L24.500 5 L17.200 12 L24.500 19 L20.500 23 L13 15.800 L5.500 23 L1.500 19 L8.800 12 Z" fill="#333"/></svg></div></div>
<div class="row" style="top:628px"><span style="left:16px">Power</span><span style="left:279px">1</span><a style="left:678px">Добавить</a><div class="s2">Связанный объект<span class="arr"></span></div><div class="ns" style="left:1326px"><svg class="chev" width="20" height="11" viewBox="0 0 20 11"><path d="M1 1 L10 9.5 L19 1" stroke="#000" stroke-width="2.4" fill="none"/></svg></div><div class="ns" style="left:1792px"><svg class="chev" width="20" height="11" viewBox="0 0 20 11"><path d="M1 1 L10 9.5 L19 1" stroke="#000" stroke-width="2.4" fill="none"/></svg></div><span style="left:2233.5px">2021-01-30 14:17:16</span><div class="xb"><svg style="position:absolute;left:25px;top:18px" width="26" height="24" viewBox="0 0 26 24"><path d="M1.500 5 L5.500 1 L13 8.200 L20.500 1 L24.500 5 L17.200 12 L24.500 19 L20.500 23 L13 15.800 L5.500 23 L1.500 19 L8.800 12 Z" fill="#333"/></svg></div></div>
<div class="row" style="top:731px"><span style="left:16px">TempSet</span><span style="left:279px">1</span><a style="left:678px">Добавить</a><div class="s2 v"><span class="txt">TuThermostat08 - Теплый пол</span><span class="clr">×</span><span class="arr"></span></div><a style="left:1268px;top:21px">#</a><div class="ns" style="left:1326px"><span class="t">currentTargetValue - Целевая</span><svg class="chev" width="20" height="11" viewBox="0 0 20 11"><path d="M1 1 L10 9.5 L19 1" stroke="#000" stroke-width="2.4" fill="none"/></svg></div><a style="left:1734px;top:16px">#</a><div class="ns" style="left:1792px"><svg class="chev" width="20" height="11" viewBox="0 0 20 11"><path d="M1 1 L10 9.5 L19 1" stroke="#000" stroke-width="2.4" fill="none"/></svg></div><span style="left:2233.5px">2021-01-30 14:17:16</span><div class="xb"><svg style="position:absolute;left:25px;top:18px" width="26" height="24" viewBox="0 0 26 24"><path d="M1.500 5 L5.500 1 L13 8.200 L20.500 1 L24.500 5 L17.200 12 L24.500 19 L20.500 23 L13 15.800 L5.500 23 L1.500 19 L8.800 12 Z" fill="#333"/></svg></div></div>
<div class="row" style="top:834px"><span style="left:16px">TempCurrent</span><span style="left:279px">4.3</span><a style="left:678px">Добавить</a><div class="s2 v"><span class="txt">TuThermostat08 - Теплый пол</span><span class="clr">×</span><span class="arr"></span></div><a style="left:1268px;top:21px">#</a><div class="ns" style="left:1326px"><span class="t">value - Текущая температура</span><svg class="chev" width="20" height="11" viewBox="0 0 20 11"><path d="M1 1 L10 9.5 L19 1" stroke="#000" stroke-width="2.4" fill="none"/></svg></div><a style="left:1734px;top:16px">#</a><div class="ns" style="left:1792px"><svg class="chev" width="20" height="11" viewBox="0 0 20 11"><path d="M1 1 L10 9.5 L19 1" stroke="#000" stroke-width="2.4" fill="none"/></svg></div><span style="left:2233.5px">2021-01-30 14:17:16</span><div class="xb"><svg style="position:absolute;left:25px;top:18px" width="26" height="24" viewBox="0 0 26 24"><path d="M1.500 5 L5.500 1 L13 8.200 L20.500 1 L24.500 5 L17.200 12 L24.500 19 L20.500 23 L13 15.800 L5.500 23 L1.500 19 L8.800 12 Z" fill="#333"/></svg></div></div>
<div class="row" style="top:937px"><span style="left:16px">floorTemp</span><span style="left:279px">2.2</span><a style="left:678px">Добавить</a><div class="s2 v"><span class="txt">TuThermostat08 - Теплый пол</span><span class="clr">×</span><span class="arr"></span></div><a style="left:1268px;top:21px">#</a><div class="ns" style="left:1326px"><span class="t">floor_temperature - Темпер</span><svg class="chev" width="20" height="11" viewBox="0 0 20 11"><path d="M1 1 L10 9.5 L19 1" stroke="#000" stroke-width="2.4" fill="none"/></svg></div><a style="left:1734px;top:16px">#</a><div class="ns" style="left:1792px"><svg class="chev" width="20" height="11" viewBox="0 0 20 11"><path d="M1 1 L10 9.5 L19 1" stroke="#000" stroke-width="2.4" fill="none"/></svg></div><span style="left:2233.5px">2021-01-30 14:17:16</span><div class="xb"><svg style="position:absolute;left:25px;top:18px" width="26" height="24" viewBox="0 0 26 24"><path d="M1.500 5 L5.500 1 L13 8.200 L20.500 1 L24.500 5 L17.200 12 L24.500 19 L20.500 23 L13 15.800 L5.500 23 L1.500 19 L8.800 12 Z" fill="#333"/></svg></div></div>
<div class="row" style="top:1040px"><span style="left:16px">Mode</span><span style="left:279px">1</span><a style="left:678px">Добавить</a><div class="s2">Связанный объект<span class="arr"></span></div><div class="ns" style="left:1326px"><svg class="chev" width="20" height="11" viewBox="0 0 20 11"><path d="M1 1 L10 9.5 L19 1" stroke="#000" stroke-width="2.4" fill="none"/></svg></div><div class="ns" style="left:1792px"><svg class="chev" width="20" height="11" viewBox="0 0 20 11"><path d="M1 1 L10 9.5 L19 1" stroke="#000" stroke-width="2.4" fill="none"/></svg></div><span style="left:2233.5px">2021-01-30 14:17:16</span><div class="xb"><svg style="position:absolute;left:25px;top:18px" width="26" height="24" viewBox="0 0 26 24"><path d="M1.500 5 L5.500 1 L13 8.200 L20.500 1 L24.500 5 L17.200 12 L24.500 19 L20.500 23 L13 15.800 L5.500 23 L1.500 19 L8.800 12 Z" fill="#333"/></svg></div></div>
<div class="row" style="top:1143px"><span style="left:16px">tempSwitch</span><span style="left:279px">0</span><a style="left:678px">Добавить</a><div class="s2">Связанный объект<span class="arr"></span></div><div class="ns" style="left:1326px"><svg class="chev" width="20" height="11" viewBox="0 0 20 11"><path d="M1 1 L10 9.5 L19 1" stroke="#000" stroke-width="2.4" fill="none"/></svg></div><div class="ns" style="left:1792px"><svg class="chev" width="20" height="11" viewBox="0 0 20 11"><path d="M1 1 L10 9.5 L19 1" stroke="#000" stroke-width="2.4" fill="none"/></svg></div><span style="left:2233.5px">2021-01-30 14:17:16</span><div class="xb"><svg style="position:absolute;left:25px;top:18px" width="26" height="24" viewBox="0 0 26 24"><path d="M1.500 5 L5.500 1 L13 8.200 L20.500 1 L24.500 5 L17.200 12 L24.500 19 L20.500 23 L13 15.800 L5.500 23 L1.500 19 L8.800 12 Z" fill="#333"/></svg></div></div>
<div class="row" style="top:1246px"><span style="left:16px">ECO</span><span style="left:279px">0</span><a style="left:678px">Добавить</a><div class="s2">Связанный объект<span class="arr"></span></div><div class="ns" style="left:1326px"><svg class="chev" width="20" height="11" viewBox="0 0 20 11"><path d="M1 1 L10 9.5 L19 1" stroke="#000" stroke-width="2.4" fill="none"/></svg></div><div class="ns" style="left:1792px"><svg class="chev" width="20" height="11" viewBox="0 0 20 11"><path d="M1 1 L10 9.5 L19 1" stroke="#000" stroke-width="2.4" fill="none"/></svg></div><span style="left:2233.5px">2021-01-30 14:17:16</span><div class="xb"><svg style="position:absolute;left:25px;top:18px" width="26" height="24" viewBox="0 0 26 24"><path d="M1.500 5 L5.500 1 L13 8.200 L20.500 1 L24.500 5 L17.200 12 L24.500 19 L20.500 23 L13 15.800 L5.500 23 L1.500 19 L8.800 12 Z" fill="#333"/></svg></div></div>
<div class="row" style="top:1349px"><span style="left:16px">floortempFunction</span><span style="left:279px">1</span><a style="left:678px">Добавить</a><div class="s2">Связанный объект<span class="arr"></span></div><div class="ns" style="left:1326px"><svg class="chev" width="20" height="11" viewBox="0 0 20 11"><path d="M1 1 L10 9.5 L19 1" stroke="#000" stroke-width="2.4" fill="none"/></svg></div><div class="ns" style="left:1792px"><svg class="chev" width="20" height="11" viewBox="0 0 20 11"><path d="M1 1 L10 9.5 L19 1" stroke="#000" stroke-width="2.4" fill="none"/></svg></div><span style="left:2233.5px">2021-01-30 14:17:16</span><div class="xb"><svg style="position:absolute;left:25px;top:18px" width="26" height="24" viewBox="0 0 26 24"><path d="M1.500 5 L5.500 1 L13 8.200 L20.500 1 L24.500 5 L17.200 12 L24.500 19 L20.500 23 L13 15.800 L5.500 23 L1.500 19 L8.800 12 Z" fill="#333"/></svg></div></div>
<div class="row" style="top:1452px"><span style="left:16px">ChildLock</span><span style="left:279px">0</span><a style="left:678px">Добавить</a><div class="s2">Связанный объект<span class="arr"></span></div><div class="ns" style="left:1326px"><svg class="chev" width="20" height="11" viewBox="0 0 20 11"><path d="M1 1 L10 9.5 L19 1" stroke="#000" stroke-width="2.4" fill="none"/></svg></div><div class="ns" style="left:1792px"><svg class="chev" width="20" height="11" viewBox="0 0 20 11"><path d="M1 1 L10 9.5 L19 1" stroke="#000" stroke-width="2.4" fill="none"/></svg></div><span style="left:2233.5px">2021-01-30 14:17:16</span><div class="xb"><svg style="position:absolute;left:25px;top:18px" width="26" height="24" viewBox="0 0 26 24"><path d="M1.500 5 L5.500 1 L13 8.200 L20.500 1 L24.500 5 L17.200 12 L24.500 19 L20.500 23 L13 15.800 L5.500 23 L1.500 19 L8.800 12 Z" fill="#333"/></svg></div></div>
</div>
<div class="abs" style="left:3158px;top:177px;width:42px;height:1547px;background:#f1f1f1"></div>
<div class="abs" style="left:3160px;top:219px;width:38px;height:580px;background:#c1c1c1"></div>
<svg class="abs" style="left:3168.7px;top:193.7px" width="20.5" height="10.3" viewBox="0 0 24 12"><path d="M0 12 L12 0 L24 12 Z" fill="#a3a3a3"/></svg>
<svg class="abs" style="left:3168.7px;top:1697.3px" width="20.5" height="10.3" viewBox="0 0 24 12"><path d="M0 0 L12 12 L24 0 Z" fill="#505050"/></svg>
<div id="taskbar">
<div class="abs" style="left:466px;top:0;width:91px;height:76px;background:#f8f8f8"></div><div class="ul" style="left:466px;width:91px"></div><div class="ul" style="left:1040px;width:71px"></div><div class="ul" style="left:1886px;width:71px"></div><div class="ul" style="left:1980px;width:71px"></div><svg class="abs" style="left:21.0px;top:14.0px" width="48.0" height="48.0" viewBox="0 0 48 48"><path d="M4 9.500 L20 7 V23 H4 Z M22.500 6.600 L44 3.500 V23 H22.500 Z M4 25.500 H20 V41.500 L4 39 Z M22.500 25.500 H44 V45 L22.500 41.900 Z" fill="#000"/></svg><svg class="abs" style="left:111.0px;top:14.0px" width="48.0" height="48.0" viewBox="0 0 48 48"><circle cx="29" cy="17" r="13" stroke="#000" stroke-width="2.600" fill="none"/><path d="M20 27 L4 43" stroke="#000" stroke-width="2.800" stroke-linecap="round"/></svg><svg class="abs" style="left:201.0px;top:14.0px" width="48.0" height="48.0" viewBox="0 0 48 48"><path d="M4 4 V10.500 H29 V4 M4 43 V36.500 H29 V43 M4 16 H29 V31 H4 Z M41 4 V15 M41 25 V43" stroke="#000" stroke-width="2.400" fill="none"/><circle cx="41" cy="20" r="3.200" fill="#000"/></svg><svg class="abs" style="left:303.3px;top:18.3px" width="39.4" height="39.4" viewBox="0 0 48 48"><defs><radialGradient id="twb" cx=".4" cy=".3" r=".8"><stop offset="0" stop-color="#7db4ef"/><stop offset=".6" stop-color="#2b6fc9"/><stop offset="1" stop-color="#153f8c"/></radialGradient></defs><circle cx="24" cy="24" r="23" fill="url(#twb)"/><path d="M13 10 C12 24 22 36 40 34 C28 32 18 24 13 10 Z M22 8 C20 20 28 30 42 30 C32 27 25 19 22 8 Z" fill="#fff"/></svg><svg class="abs" style="left:397.3px;top:18.3px" width="39.4" height="39.4" viewBox="0 0 48 48"><path d="M2 8 C2 6.500 3 6 4 6 H17 L21 10 H44 C45.500 10 46 11 46 12 V40 H2 Z" fill="#e8a917"/><path d="M2 14 H46 V40 C46 41.500 45 42 44 42 H4 C3 42 2 41.500 2 40 Z" fill="#ffd35c"/><path d="M10 42 V30 C10 28.500 11 28 12 28 H36 C37 28 38 28.500 38 30 V42 H31 V34 H17 V42 Z" fill="#2f86d6"/></svg><svg class="abs" style="left:491.3px;top:18.3px" width="39.4" height="39.4" viewBox="0 0 48 48"><circle cx="24" cy="24" r="23" fill="#fff"/><path d="M24 24 L4.100 12.500 A23 23 0 0 1 43.900 12.500 Z" fill="#db4437"/><path d="M24 24 L43.900 12.500 A23 23 0 0 1 24 47 Z" fill="#ffcd40"/><path d="M24 24 L24 47 A23 23 0 0 1 4.100 12.500 Z" fill="#0f9d58"/><path d="M24 13 H43.700 A23 23 0 0 0 4.100 12.500 L14 29 Z" fill="#db4437"/><path d="M33.500 29.500 L24 47 A23 23 0 0 0 43.700 13 H24 Z" fill="#ffcd40"/><path d="M14.500 29.500 L4.100 12.500 A23 23 0 0 0 24 47 L33.500 29.500 Z" fill="#0f9d58"/><circle cx="24" cy="24" r="10.500" fill="#f1f1f1"/><circle cx="24" cy="24" r="8.500" fill="#4285f4"/></svg><svg class="abs" style="left:584.1px;top:17.1px" width="41.8" height="41.8" viewBox="0 0 48 48"><defs><linearGradient id="ted" x1="0" y1="0" x2="1" y2="0"><stop offset="0" stop-color="#1da1e6"/><stop offset=".6" stop-color="#2dc3b4"/><stop offset="1" stop-color="#5bd44d"/></linearGradient></defs><path d="M3 26 C1 12 12 1 25 1 C38 1 47 9 47 20 C47 28 41 32 35 32 C30 32 28 29 30 26 C32 22 28 16 22 16 C14 16 7 20 3 26 Z" fill="url(#ted)"/><path d="M3 26 C3 38 12 47 24 47 C32 47 38 44 42 38 C36 41 28 41 22 36 C16 31 16 22 22 16 C12 15 4 19 3 26 Z" fill="#0c59a4"/><path d="M13 30 C13 40 22 47 33 45 C37 44 40 41 42 38 C34 42 24 41 19 34 C16 30 17 24 22 21 C17 22 13 25 13 30 Z" fill="#1b74c4"/></svg><svg class="abs" style="left:679.3px;top:18.3px" width="39.4" height="39.4" viewBox="0 0 48 48"><defs><linearGradient id="top" x1="0" y1="0" x2="0" y2="1"><stop offset="0" stop-color="#ff1b2d"/><stop offset="1" stop-color="#a70014"/></linearGradient></defs><circle cx="24" cy="24" r="23.500" fill="url(#top)"/><ellipse cx="24" cy="24" rx="11.800" ry="17.500" fill="#eeeeee"/></svg><svg class="abs" style="left:773.3px;top:18.3px" width="39.4" height="39.4" viewBox="0 0 48 48"><circle cx="24" cy="24" r="23.500" fill="#f4f4f4" stroke="#d2d2d2" stroke-width="1.200"/><text x="24" y="40" text-anchor="middle" font-family="Liberation Sans,sans-serif" font-weight="bold" font-size="40" fill="#e8131e">Y</text></svg><svg class="abs" style="left:867.3px;top:18.3px" width="39.4" height="39.4" viewBox="0 0 48 48"><path d="M3 19 L14 13 L26 17 L45 14 L42 40 L28 44 L16 40 L2 44 Z" fill="#fbe1ad" stroke="#222" stroke-width="1" stroke-dasharray="3 2"/><path d="M14 13 L16 40 M26 17 L28 44" stroke="#e9c27d" stroke-width="1.500"/><path d="M29 1 C35 1 38 5.500 38 10 C38 16 31 20 29 26 C27 20 20 16 20 10 C20 5.500 23 1 29 1 Z" fill="#f06a1d"/><circle cx="29" cy="10" r="4.500" fill="#fff"/><rect x="23" y="31" width="3" height="3" fill="#3b82d6"/></svg><svg class="abs" style="left:962.3px;top:19.3px" width="37.4" height="37.4" viewBox="0 0 48 48"><rect x="1" y="1" width="46" height="46" rx="7" fill="#c4572b"/><rect x="1" y="1" width="46" height="46" rx="7" fill="none" stroke="#9b431f" stroke-width="1.500"/><text x="30" y="38" text-anchor="middle" font-family="Liberation Sans,sans-serif" font-size="36" fill="#fff">#</text></svg><svg class="abs" style="left:1055.3px;top:18.3px" width="39.4" height="39.4" viewBox="0 0 48 48"><rect x="13" y="2" width="35" height="44" rx="3" fill="#185c37"/><path d="M13 5 C13 3 14 2 16 2 H30 V13 H13 Z" fill="#21a366"/><path d="M30 2 H45 C47 2 48 3 48 5 V13 H30 Z" fill="#33c481"/><rect x="30" y="13" width="18" height="11" fill="#21a366"/><rect x="13" y="13" width="17" height="11" fill="#107c41"/><rect x="30" y="24" width="18" height="11" fill="#107c41"/><rect x="1" y="12" width="25" height="25" rx="2.500" fill="#107c41"/><text x="13.500" y="32" text-anchor="middle" font-family="Liberation Sans,sans-serif" font-weight="bold" font-size="20" fill="#fff">X</text></svg><svg class="abs" style="left:1149.3px;top:18.3px" width="39.4" height="39.4" viewBox="0 0 48 48"><rect x="1" y="1" width="46" height="46" fill="#b30000" stroke="#7d0000" stroke-width="2" stroke-dasharray="3 2"/><text x="24" y="38" text-anchor="middle" font-family="Liberation Sans,sans-serif" font-weight="bold" font-style="italic" font-size="38" fill="#fff" letter-spacing="-3">Fz</text></svg><svg class="abs" style="left:1243.3px;top:18.3px" width="39.4" height="39.4" viewBox="0 0 48 48"><path d="M2 4 L30 6 L46 16 V46 L20 46 L4 30 Z" fill="#ead9e6" opacity=".8"/><g transform="rotate(-42 24 24)"><rect x="14" y="-2" width="19" height="30" rx="4" fill="#9cdc3a" stroke="#5c9c12" stroke-width="1.500"/><rect x="18" y="-2" width="5" height="30" fill="#d3f58e"/><rect x="9" y="26" width="29" height="18" rx="5" fill="#8fd42e" stroke="#5c9c12" stroke-width="1.500"/><ellipse cx="23.500" cy="40" rx="12" ry="6.500" fill="#e9f4f6" stroke="#6aa81a" stroke-width="2"/></g></svg><svg class="abs" style="left:1336.5px;top:18.3px" width="41.0" height="39.4" viewBox="0 0 50 48"><circle cx="27" cy="24" r="22" fill="#ed6c47"/><path d="M27 2 A22 22 0 0 1 49 24 H27 Z" fill="#ff8f6b"/><path d="M27 24 H49 A22 22 0 0 1 27 46 Z" fill="#d35230"/><rect x="1" y="12" width="25" height="25" rx="2.500" fill="#c43e1c"/><text x="13.500" y="32" text-anchor="middle" font-family="Liberation Sans,sans-serif" font-weight="bold" font-size="20" fill="#fff">P</text></svg><svg class="abs" style="left:1431.3px;top:18.3px" width="39.4" height="39.4" viewBox="0 0 48 48"><rect x="13" y="2" width="35" height="44" rx="3" fill="#103f91"/><path d="M13 5 C13 3 14 2 16 2 H45 C47 2 48 3 48 5 V13 H13 Z" fill="#41a5ee"/><rect x="13" y="13" width="35" height="11" fill="#2b7cd3"/><rect x="13" y="24" width="35" height="11" fill="#185abd"/><rect x="1" y="12" width="25" height="25" rx="2.500" fill="#185abd"/><text x="13.500" y="32" text-anchor="middle" font-family="Liberation Sans,sans-serif" font-weight="bold" font-size="19" fill="#fff">W</text></svg><svg class="abs" style="left:1525.3px;top:18.3px" width="39.4" height="39.4" viewBox="0 0 48 48"><rect x="13" y="2" width="35" height="30" rx="2" fill="#0364b8"/><rect x="13" y="2" width="12" height="10" fill="#0078d4"/><rect x="25" y="2" width="11" height="10" fill="#28a8ea"/><rect x="36" y="2" width="12" height="10" fill="#50d9ff"/><rect x="25" y="12" width="11" height="10" fill="#0078d4"/><rect x="36" y="12" width="12" height="10" fill="#28a8ea"/><rect x="36" y="22" width="12" height="10" fill="#0078d4"/><path d="M13 26 L48 24 V43 C48 45 47 46 45 46 H16 C14 46 13 45 13 43 Z" fill="#1490df"/><path d="M13 26 L48 46 H16 C14 46 13 45 13 43 Z" fill="#28a8ea"/><rect x="1" y="12" width="25" height="25" rx="2.500" fill="#0f6cbd"/><text x="13.500" y="32" text-anchor="middle" font-family="Liberation Sans,sans-serif" font-weight="bold" font-size="20" fill="#fff">O</text></svg><svg class="abs" style="left:1619.3px;top:18.3px" width="39.4" height="39.4" viewBox="0 0 48 48"><path d="M2 2 L38 6 L36 32 L4 28 Z" fill="#c9ccd6" stroke="#9a9dab" stroke-width="1"/><path d="M5 5 L35 8.500 L33.500 29 L6.500 25.500 Z" fill="#1533c9"/><path d="M5 5 L20 6.800 L12 26.200 L6.500 25.500 Z" fill="#0a1a8a"/><path d="M22 7 L35 8.500 L34 22 Z" fill="#5f86f0" opacity=".7"/><path d="M16 31 L24 32 L26 40 H12 Z" fill="#d0d0d0"/><ellipse cx="19" cy="42" rx="12" ry="4" fill="#e2e2e2" stroke="#b5b5b5" stroke-width="1"/><circle cx="37" cy="36" r="10.500" fill="#e9e9e9" stroke="#b0b0b0" stroke-width="1.500"/><path d="M30.500 32 L35 36 L30.500 40 M43.500 32 L39 36 L43.500 40" stroke="#2fa52a" stroke-width="2.500" fill="none"/></svg><svg class="abs" style="left:1713.3px;top:18.3px" width="39.4" height="39.4" viewBox="0 0 48 48"><rect x="1" y="1" width="46" height="46" rx="8" fill="#6bd0f2"/><rect x="1" y="30" width="46" height="17" rx="8" fill="#8edcf6"/><path d="M12 31 C6 31 5 23 11 21.500 C10 14 19 11 22 16 C25 9 36 11 35 19 C42 19 43 30 36 31 Z" fill="#fff"/><path d="M6 33 C16 29 30 34 42 30 C34 37 16 34 6 36 Z" fill="#fff"/><path d="M18 22 L24 17 L30 22 V29 H18 Z" fill="none" stroke="#6bd0f2" stroke-width="1.800"/><circle cx="24" cy="24.500" r="2" fill="none" stroke="#6bd0f2" stroke-width="1.300"/></svg><svg class="abs" style="left:1807.3px;top:18.3px" width="39.4" height="39.4" viewBox="0 0 48 48"><path d="M2 46 C8 36 16 33 22 33 C32 33 40 38 46 46 C34 47 14 47 2 46 Z" fill="#8e8e8e"/><path d="M2 46 C8 38 14 35 20 34 L20 44 Z" fill="#c2c2c2"/><circle cx="25" cy="20" r="17" fill="#b9b9b9"/><circle cx="25" cy="20" r="17" fill="none" stroke="#8a8a8a" stroke-width="1"/><path d="M12 8 C18 2 32 2 38 8 C32 5 18 5 12 8 Z" fill="#e8e8e8"/><rect x="21" y="1" width="8" height="4" rx="2" fill="#e8a41a"/><circle cx="20" cy="24" r="11.500" fill="#f2a218"/><circle cx="20" cy="24" r="9" fill="#3a2a12"/><circle cx="20" cy="24" r="6" fill="#4b4f4a"/><circle cx="20" cy="24" r="3" fill="#1f211f"/></svg><svg class="abs" style="left:1901.3px;top:18.3px" width="39.4" height="39.4" viewBox="0 0 48 48"><path d="M24 1 A22.500 22.500 0 1 1 12.500 43.500 L1.500 46.500 L4.700 35.800 A22.500 22.500 0 0 1 24 1 Z" fill="#fff"/><path d="M24 4.500 A19 19 0 1 1 13.500 39.500 L6.500 41.500 L8.600 34.700 A19 19 0 0 1 24 4.500 Z" fill="#25d366"/><path d="M17.500 13 C16 13 14.500 15 14.500 17.500 C14.500 24 23 33 30 33 C32.500 33 34.500 31.500 34.500 30 L34.500 28.800 L29.800 26.500 L27.800 29 C25 28 20 23 19.500 20.800 L21.600 18.800 L19.600 13.300 Z" fill="#fff"/></svg><svg class="abs" style="left:1995.3px;top:18.3px" width="39.4" height="39.4" viewBox="0 0 48 48"><defs><linearGradient id="ttg" x1="0" y1="0" x2="0" y2="1"><stop offset="0" stop-color="#2aa3dc"/><stop offset="1" stop-color="#1586c2"/></linearGradient></defs><circle cx="24" cy="24" r="23.500" fill="url(#ttg)"/><path d="M9 23.500 L36 12.500 C37.500 12 38.500 13 38 15 L33.500 35.500 C33.200 37 32 37.300 30.800 36.500 L24 31.500 L20.500 35 C20 35.500 19.500 35.500 19.300 34.800 L17.500 28 L9.500 25.500 C8.300 25.100 8.200 24 9 23.500 Z" fill="#fff"/><path d="M17.500 28 L33 17 L21 30 L20.500 35 Z" fill="#c8daea"/></svg><svg class="abs" style="left:2088.5px;top:18.3px" width="41.0" height="39.4" viewBox="0 0 50 48"><circle cx="40" cy="13" r="5.500" fill="#5059c9"/><path d="M33 21 H47 C48 21 48.500 21.500 48.500 22.500 V33 C48.500 37 46 40 42 40 C38 40 33 37 33 33 Z" fill="#5059c9"/><circle cx="27.500" cy="9.500" r="8" fill="#7b83eb"/><path d="M15 21 H38 C39 21 39.500 21.500 39.500 22.500 V36 C39.500 42 34 46.500 27.500 46.500 C21 46.500 15 42 15 36 Z" fill="#7b83eb"/><rect x="1" y="12" width="25" height="25" rx="2.500" fill="#4b53bc"/><text x="13.500" y="32" text-anchor="middle" font-family="Liberation Sans,sans-serif" font-weight="bold" font-size="20" fill="#fff">T</text></svg><svg class="abs" style="left:2183.3px;top:18.3px" width="39.4" height="39.4" viewBox="0 0 48 48"><path d="M3 6 H30 L38 14 V46 H3 Z" fill="#f3f3f3" stroke="#8a8a8a" stroke-width="1.200"/><path d="M4 4 H30" stroke="#555" stroke-width="2.500" stroke-dasharray="1.500 1.500"/><rect x="5" y="22" width="31" height="22" fill="#8fd14a"/><path d="M8 28 C12 20 24 20 26 27 C30 27 33 30 31 34 C26 33 22 36 16 35 C11 34 8 32 8 28 Z" fill="#c9e89a" stroke="#3d5a17" stroke-width="1.500"/><circle cx="22" cy="17" r="3.500" fill="#fff" stroke="#333" stroke-width="1"/><circle cx="28" cy="17" r="3.500" fill="#fff" stroke="#333" stroke-width="1"/><path d="M8 40 H30 M12 37 V43 M20 37 V43 M26 37 V43" stroke="#2e4a10" stroke-width="1.500"/><path d="M44 2 L47 4 L34 34 L30 36 L31 32 Z" fill="#f0c030" stroke="#7a5a10" stroke-width="1"/><path d="M44 2 L47 4 L45.500 7 L42.500 5 Z" fill="#e86a6a"/></svg><svg class="abs" style="left:2707px;top:25px" width="34" height="20" viewBox="0 0 34 20"><path d="M1.500 18.500 L17 3 L32.500 18.500" stroke="#000" stroke-width="2.400" fill="none"/></svg><svg class="abs" style="left:2764px;top:18px" width="42" height="42" viewBox="0 0 42 42"><defs><linearGradient id="ttg2" x1="0" y1="0" x2="0" y2="1"><stop offset="0" stop-color="#2aa3dc"/><stop offset="1" stop-color="#1586c2"/></linearGradient></defs><circle cx="19.500" cy="19.500" r="19.500" fill="url(#ttg2)"/><path d="M7 19.500 L29 10.500 C30.200 10 31 11 30.600 12.500 L27 29 C26.800 30.200 25.800 30.500 24.800 29.800 L19.500 25.800 L16.800 28.500 C16.300 29 15.900 28.900 15.700 28.300 L14.300 23 L7.500 21 C6.500 20.700 6.400 19.900 7 19.500 Z" fill="#fff"/><path d="M14.300 23 L27 14 L17.200 24.700 L16.800 28.500 Z" fill="#c8daea"/><rect x="19" y="21" width="21" height="19" rx="6" fill="#8b8b8b"/><text x="29.500" y="36" text-anchor="middle" font-family="Liberation Sans,sans-serif" font-weight="bold" font-size="15" fill="#fff">..1</text></svg><svg class="abs" style="left:2824px;top:20px" width="40" height="36" viewBox="0 0 40 36"><path d="M10 0 L20 6.400 L10 12.800 L0 6.400 Z M30 0 L40 6.400 L30 12.800 L20 6.400 Z M10 12.800 L20 19.200 L10 25.600 L0 19.200 Z M30 12.800 L40 19.200 L30 25.600 L20 19.200 Z M20 21.600 L30 28 L20 34.400 L10 28 Z" fill="#000"/></svg><div class="abs" style="left:2890px;top:18px;font-size:28.600px;line-height:40px;color:#000;letter-spacing:-1.500px;margin-top:1.5px">ENG</div><div class="abs" style="left:2979px;top:18px;font-size:28.600px;line-height:40px;color:#000;letter-spacing:-.2px;margin-top:1.5px">14:17</div><svg class="abs" style="left:3094px;top:16px" width="48" height="44" viewBox="0 0 48 44"><path d="M30 36 H3 V3 H41 V24" stroke="#000" stroke-width="2.400" fill="none"/><path d="M14 36 H19 L24 41" stroke="#000" stroke-width="2.400" fill="none"/><path d="M34 26 C39 32 35 40 27 39 C31 44 42 42 43 33 C43 29 39 25 34 26 Z" fill="none" stroke="#000" stroke-width="2.200"/></svg><div class="abs" style="left:3188px;top:0;width:2px;height:76px;background:#8e8e8e"></div>
</div>
</body></html>
